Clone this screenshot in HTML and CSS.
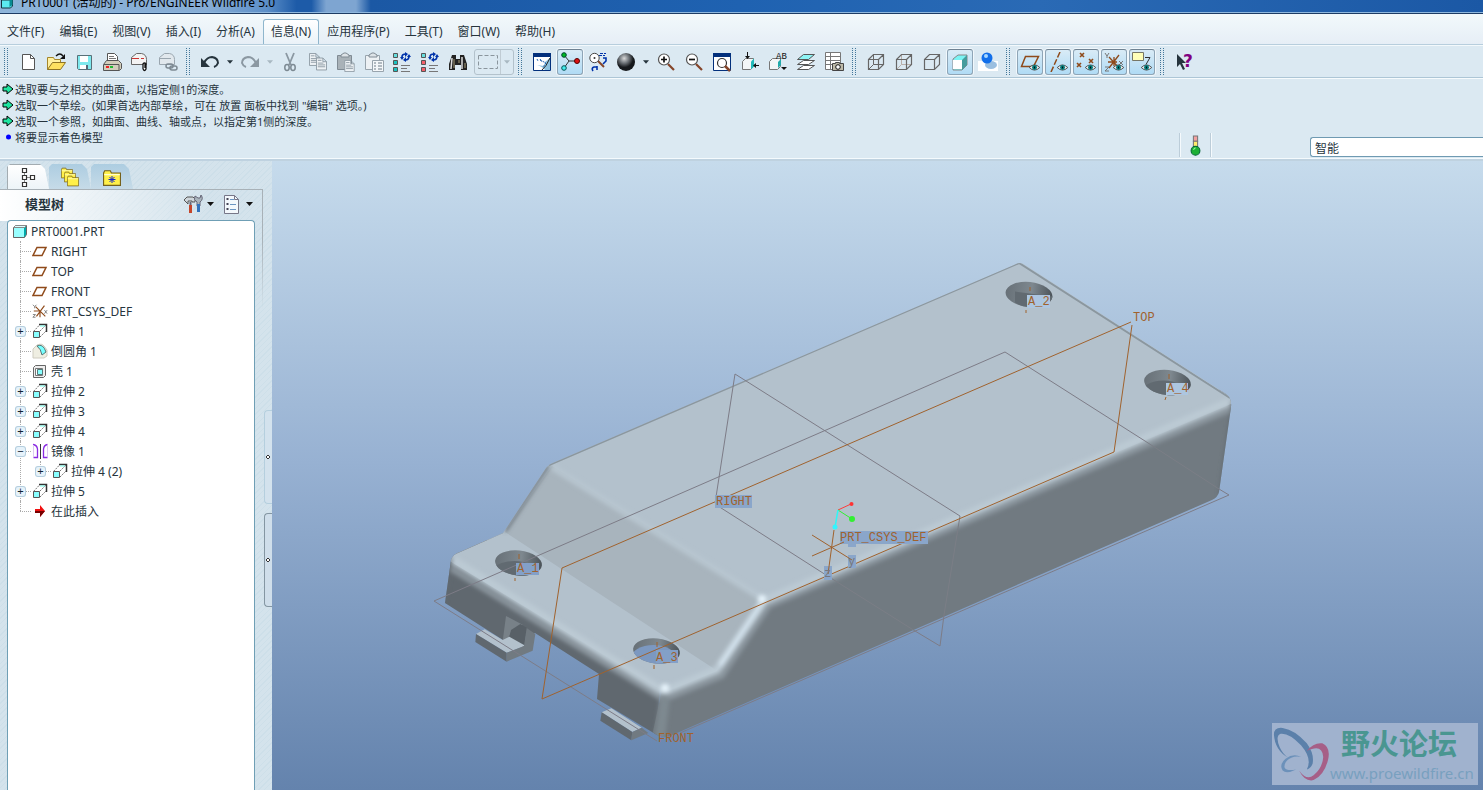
FILE: index.html
```html
<!DOCTYPE html>
<html lang="zh-CN">
<head>
<meta charset="utf-8">
<title>PRT0001 (活动的) - Pro/ENGINEER Wildfire 5.0</title>
<link rel="stylesheet" href="styles.css">
</head>
<body>
<svg class="defs" aria-hidden="true">
  <defs>
    <symbol id="plane" viewBox="0 0 16 16"><path d="M5 4.500h9l-4 8H1z" fill="none" stroke="#8f4a1a" stroke-width="1.500"/></symbol>
    <symbol id="extrude" viewBox="0 0 16 16"><path d="M1.500 8.500l6-6.500M8 14l6-6M8 8l6-6" fill="none" stroke="#777" stroke-dasharray="2 1"/><path d="M7 1.500h7.500V9" fill="none" stroke="#333" stroke-width="1.500"/><path d="M8 3h5" stroke="#7fe" /><path d="M1.500 8.500h6v6h-6z" fill="#8ff" stroke="#555"/></symbol>
    <symbol id="cube" viewBox="0 0 16 16"><path d="M1.500 4.500l2-2h11v9l-2 3h-11z" fill="#0aa" stroke="#666"/><path d="M1.500 4.500l2-2h11l-2 2z" fill="#dff" stroke="#888"/><path d="M2 5h10v9H2z" fill="#9ff"/></symbol>
    <symbol id="eye" viewBox="0 0 12 8"><path d="M0 4Q6-2 12 4Q6 10 0 4z" fill="#eee" stroke="#444"/><circle cx="6" cy="4" r="2.800" fill="#077"/><path d="M6 3v2" stroke="#000"/></symbol>
    <symbol id="page" viewBox="0 0 12 14"><path d="M.5.5h7l4 4v9H.5zM7.500.5v4h4" fill="#eef2f5" stroke="#8b98a2"/><path d="M2 6h6M2 8h8M2 10h8M2 3h4" stroke="#8b98a2"/></symbol>
    <symbol id="wire" viewBox="0 0 20 20"><path d="M2.500 7.500l5-5h10v10l-5 5h-10zM2.500 7.500h10v10M12.500 7.500l5-5" fill="none" stroke="#666" stroke-width="1.200"/></symbol>
    <symbol id="lens" viewBox="0 0 20 20"><path d="M12 12l6 6" stroke="#854529" stroke-width="2.200"/><circle cx="8" cy="7.500" r="5.500" fill="#fff" stroke="#555" stroke-width="1.200"/></symbol>
    <symbol id="regen" viewBox="0 0 20 20"><path d="M1.500 1.500h4v4h-4z" stroke="#555" fill="#6dd"/><path d="M1.500 8.500h4v4h-4zM1.500 15.500h4v4h-4z" stroke="#555" fill="currentColor"/><path d="M10 5Q10 2 14 2M17 4Q17 8 13 8" stroke="#03a" stroke-width="1.700" fill="none"/><path d="M13 0l3 2-3 3zM14 5l-3 3 3 2zM8 5h4l-2 3zM15 5h4l-2-3z" fill="#03a"/><path d="M9 13.500h9M9 16.500h6M9 19.500h9" stroke="#777"/></symbol>
    <symbol id="folder" viewBox="0 0 16 16"><path d="M.5 3.500l1-2h5l1 2h8v11H.5z" fill="#fff04a" stroke="#75611c"/><path d="M1 5h14" stroke="#ffc"/></symbol>
    <symbol id="csys" viewBox="0 0 18 16"><path d="M4 3l11 11M14 2L5 14M9 8h-7M9 8v7" stroke="#8f4a1a" stroke-width="1.300"/><path d="M1 1l2 2 2-2M3 3v2M14 7l3 4M17 7l-3 4M1 12h3l-3 3h3" stroke="#777" fill="none"/></symbol>
    <symbol id="csys-large" viewBox="0 0 20 20"><path d="M5 5l10 11M15 3L5 16M4 10h9M10 5v9" stroke="#8f4a1a" stroke-width="1.300"/><path d="M1 1l2 3 2-3M3 4v2M15 9l4 4M19 9l-4 4M1 15h4l-4 4h4" stroke="#777" fill="none"/></symbol>
    <symbol id="arrow" viewBox="0 0 12 12"><path d="M1 4h4V1l6 5-6 5V8H1z" fill="#1fe5a0" stroke="#000"/></symbol>
    <symbol id="caret" viewBox="0 0 7 4"><path d="M0 0h7L3.500 4z" fill="currentColor"/></symbol>
    <pattern id="grip-dots" width="3" height="2" patternUnits="userSpaceOnUse"><path d="M0 0h1v1H0z" fill="#43779a"/></pattern>
    <symbol id="handle"><path d="M0 0h8v28H0z" fill="url(#grip-dots)"/></symbol>
  </defs>
</svg>

<div class="app">
  <header class="titlebar">
    <svg class="title-icon" viewBox="0 0 14 10"><path d="M1.500 0v8h9l2-2V0z" fill="#5ceaf0" stroke="#163540"/><path d="M9.500 0v7l3-2V0z" fill="#078b92"/></svg>
    <span>PRT0001 (活动的) - Pro/ENGINEER Wildfire 5.0</span>
  </header>

  <nav class="menubar">
    <button>文件(F)</button><button>编辑(E)</button><button>视图(V)</button><button>插入(I)</button><button>分析(A)</button><button class="open">信息(N)</button><button>应用程序(P)</button><button>工具(T)</button><button>窗口(W)</button><button>帮助(H)</button>
  </nav>

  <div class="toolbar" role="toolbar">
    <svg class="handle"><use href="#handle"/></svg>
    <button aria-label="新建"><svg viewBox="0 0 20 20"><path d="M4.500 2.500h8l4 4v11h-12z" fill="#fff" stroke="#555"/><path d="M12.500 2.500v4h4" fill="none" stroke="#555"/></svg></button>
    <button aria-label="打开"><svg viewBox="0 0 20 20"><path d="M1.500 17.500v-12h6l1 2h6v3" fill="#fff0a0" stroke="#a5862a"/><path d="M1.500 17.500l5-7h13l-5 7z" fill="#fde060" stroke="#8d7324"/><path d="M10 4Q14 0 17 4" fill="none" stroke="#111" stroke-width="1.300"/><path d="M19 2v5h-5z" fill="#111"/></svg></button>
    <button aria-label="保存"><svg viewBox="0 0 20 20"><path d="M3.500 3.500h14v14h-13l-1-1z" fill="#7ee9ee" stroke="#587078"/><path d="M6 4h8v6H6zM6 13h8v4H6z" fill="#fff"/><path d="M12 13h2v4h-2z" fill="#567"/></svg></button>
    <button aria-label="打印"><svg viewBox="0 0 20 20"><path d="M5.500 9V1.500h7l3 3V10" fill="#fff" stroke="#555"/><path d="M7 4.500h5M7 6.500h7" stroke="#777"/><path d="M1.500 12.500l3-4h12l3 3v5l-2 2h-16z" fill="#d2cebc" stroke="#555"/><path d="M2 12.500h15V18" stroke="#555" fill="none"/><path d="M4 14h3v2H4z" fill="#e22"/><path d="M8 14h3v2H8z" fill="#2b3"/></svg></button>
    <button aria-label="附件邮件"><svg viewBox="0 0 20 20"><path d="M1.500 12.500v-7l5-4h5q5 1 5 6v5z" fill="#f3f3f3" stroke="#666"/><path d="M2 6.500h7M11 6.500h3" stroke="#c33"/><path d="M13 17v-5q1.500-2 3 0v5q-1.500 3-3 0M15 12v4" stroke="#111" stroke-width="1.300" fill="#fff"/></svg></button>
    <button aria-label="链接邮件"><svg viewBox="0 0 20 20"><path d="M1.500 12.500v-7l5-4h5q5 1 5 6v5z" fill="#e1e8ed" stroke="#9aa6af"/><path d="M2 6.500h11" stroke="#9aa6af"/><g fill="none" stroke="#7d8992" stroke-width="1.500"><rect x="8" y="12" width="7" height="4" rx="2"/><rect x="12" y="14" width="7" height="4" rx="2"/></g></svg></button>
    <svg class="handle"><use href="#handle"/></svg>
    <button aria-label="撤消"><svg viewBox="0 0 20 20"><path d="M4 11Q7 5 12 5q6 1 6 6q-1 3-4 4" fill="none" stroke="#26343d" stroke-width="2"/><path d="M1 6v9h9z" fill="#26343d"/></svg></button>
    <button class="drop" aria-label="撤消列表"><svg><use href="#caret"/></svg></button>
    <button aria-label="重做"><svg viewBox="0 0 20 20"><path d="M16 11Q13 5 8 5q-6 1-6 6q1 3 4 4" fill="none" stroke="#8b98a2" stroke-width="2"/><path d="M19 6v9h-9z" fill="#8b98a2"/></svg></button>
    <button class="drop faded" aria-label="重做列表"><svg><use href="#caret"/></svg></button>
    <button aria-label="剪切"><svg viewBox="0 0 20 20"><path d="M6 1l5 12M14 1L9 13" stroke="#8b98a2" stroke-width="1.800"/><g fill="none" stroke="#7c8992" stroke-width="1.500"><ellipse cx="7" cy="15.500" rx="2.200" ry="3"/><ellipse cx="13" cy="15.500" rx="2.200" ry="3"/></g></svg></button>
    <button aria-label="复制"><svg viewBox="0 0 20 20"><use href="#page" x="1" y="1" width="11" height="13"/><use href="#page" x="8" y="5" width="11" height="14"/></svg></button>
    <button aria-label="粘贴"><svg viewBox="0 0 20 20"><path d="M1.500 3.500h14v14h-14z" fill="#a9b2b8" stroke="#808b94"/><path d="M5 5V3l3-2h2l3 2v2z" fill="#dde3e7" stroke="#808b94"/><use href="#page" x="8" y="8" width="11" height="12"/></svg></button>
    <button aria-label="选择性粘贴"><svg viewBox="0 0 20 20"><path d="M1.500 3.500h14v14h-14z" fill="#edf1f4" stroke="#98a4ad"/><path d="M5 5V3l3-2h2l3 2v2z" fill="#dde3e7" stroke="#808b94"/><path d="M8.500 8.500h11v11h-11z" fill="#f4f7f9" stroke="#98a4ad"/><path d="M10 11h2M14 11h4M10 14h2M14 14h4M10 17h2M14 17h4" stroke="#6e7c88"/></svg></button>
    <button aria-label="再生" class="teal"><svg viewBox="0 0 20 20"><use href="#regen"/></svg></button>
    <button aria-label="再生管理器" class="red"><svg viewBox="0 0 20 20"><use href="#regen"/></svg></button>
    <button aria-label="查找"><svg viewBox="0 0 20 20"><path d="M4 3h4v4h4V3h4l3 9v6h-6v-5H7v5H1v-6z" fill="#222"/><path d="M4 6l-1 11M14 5v12" stroke="#ddd" stroke-width="1.500"/><path d="M6 7v9M11 8v3M17 11v5" stroke="#a59b77"/></svg></button>
    <span class="selectbox"><button aria-label="选取框"><svg viewBox="0 0 20 14"><path d="M.5.5h19v13H.5z" fill="none" stroke="#8a959d" stroke-dasharray="4 2"/></svg></button><button class="drop faded" aria-label="选取框列表"><svg><use href="#caret"/></svg></button></span>
    <svg class="handle"><use href="#handle"/></svg>
    <button aria-label="重画"><svg viewBox="0 0 20 20"><path d="M1.500 1.500h17v17h-17z" fill="#fff" stroke="#03307c"/><path d="M1 1h18v4H1z" fill="#03307c"/><path d="M18 6v12h-5q-2-3-8-5l7 1 1-4z" fill="#8cc3e0"/><path d="M8 8l6 3-3 4M5 7l1 2M8 7l2 3" stroke="#1c61b0" stroke-dasharray="2 1" fill="none"/><path d="M10 18q4-3 8-12" stroke="#222" fill="none"/></svg></button>
    <button class="on" aria-label="旋转中心"><svg viewBox="0 0 20 20"><path d="M4 3l5 6h8M9 9l-5 7" stroke="#333" fill="none"/><circle cx="4" cy="3" r="2.300" fill="#0b2" stroke="#043"/><circle cx="17" cy="9" r="2.500" fill="#d11" stroke="#500"/><circle cx="4" cy="16" r="2.300" fill="#4ee" stroke="#055"/></svg></button>
    <button aria-label="定向模式"><svg viewBox="0 0 20 20"><path d="M10 9l6 6" stroke="#854529" stroke-width="2"/><circle cx="6.500" cy="6" r="4.700" fill="#fff" stroke="#444"/><circle cx="6.500" cy="6" r="1" fill="#333"/><path d="M12 1.500h6M11 3.500h6" stroke="#03a" stroke-dasharray="3 1"/><path d="M15 6h3v3l-3 3M5 19q-2-3 1-4h3M9 14v4" stroke="#03a" stroke-width="1.600" fill="none"/></svg></button>
    <button aria-label="外观库"><svg viewBox="0 0 20 20"><defs><radialGradient id="ball" cx=".4" cy=".3"><stop stop-color="#d8d8d8"/><stop offset=".5" stop-color="#74797e"/><stop offset="1" stop-color="#16191c"/></radialGradient></defs><circle cx="10" cy="10" r="9" fill="url(#ball)"/></svg></button>
    <button class="drop" aria-label="外观列表"><svg><use href="#caret"/></svg></button>
    <button aria-label="放大"><svg viewBox="0 0 20 20"><use href="#lens"/><path d="M5 7.500h6M8 4.500v6" stroke="#111" stroke-width="1.700"/></svg></button>
    <button aria-label="缩小"><svg viewBox="0 0 20 20"><use href="#lens"/><path d="M5 7.500h6" stroke="#111" stroke-width="1.700"/></svg></button>
    <button aria-label="重新调整"><svg viewBox="0 0 20 20"><path d="M1.500 1.500h17v17h-17z" fill="#fff" stroke="#03307c"/><path d="M1 1h18v4H1z" fill="#03307c"/><circle cx="10" cy="11" r="4.500" fill="#fff" stroke="#333" stroke-width="1.200"/><path d="M13 14l5 5" stroke="#854529" stroke-width="2.500"/></svg></button>
    <button aria-label="重定向"><svg viewBox="0 0 20 20"><path d="M2.500 9.500l3-3h8v8l-3 3h-8z" fill="#f4f6f7" stroke="#777"/><path d="M11 9.500l3-3v8l-3 3z" fill="#2bb"/><path d="M7.500 0v6M14 13.500h5" stroke="#111"/><path d="M5 4h5L7.500 7zM16 11v5l-3-2.500z" fill="#111"/></svg></button>
    <button aria-label="视图列表"><svg viewBox="0 0 20 20"><path d="M1.500 9.500l3-3h8v8l-3 3h-8z" fill="#f4f6f7" stroke="#777"/><path d="M10 10l3-3v6l-3 3z" fill="#2aa"/><text x="8" y="7" font-family="Liberation Mono" font-size="9" fill="#111">AB</text><path d="M13 15h6l-3 3z" fill="#111"/></svg></button>
    <button aria-label="图层"><svg viewBox="0 0 20 20"><g stroke="#555" fill="#fff"><path d="M1.500 17.500l6-4h11l-6 4z"/><path d="M1.500 12.500l6-4h11l-6 4z"/><path d="M1.500 7.500l6-5h11l-6 5z" fill="#8ef4f4"/></g></svg></button>
    <button aria-label="视图管理器"><svg viewBox="0 0 20 20"><path d="M1.500.5h15v17h-15zM6.500 1v16M2 4.500h14M2 8.500h14M2 12.500h8" fill="#fff" stroke="#777"/><path d="M8.500 11.500h3v-1h4v1h4v7h-11z" fill="#bdb9a8" stroke="#444"/><circle cx="14" cy="15" r="2.300" fill="#fff" stroke="#111"/></svg></button>
    <svg class="handle"><use href="#handle"/></svg>
    <button aria-label="线框"><svg viewBox="0 0 20 20"><use href="#wire"/><path d="M7.500 2.500v10h10M7.500 12.500l-5 5" stroke="#666" fill="none"/></svg></button>
    <button aria-label="隐藏线"><svg viewBox="0 0 20 20"><path d="M7.500 2.500v10h10M7.500 12.500l-5 5" stroke="#b9b0ab" fill="none"/><use href="#wire"/></svg></button>
    <button aria-label="无隐藏线"><svg viewBox="0 0 20 20"><use href="#wire"/></svg></button>
    <button class="on" aria-label="着色"><svg viewBox="0 0 20 20"><path d="M3 7l5-4h9v10l-5 5H3z" fill="#7af4f4" stroke="#888"/><path d="M3 8h9v9H3z" fill="#fff"/><path d="M12 8l5-5v10l-5 5z" fill="#469c9d"/></svg></button>
    <button aria-label="增强的真实感"><svg viewBox="0 0 20 20"><path d="M0 9h20v10H0z" fill="#fff"/><ellipse cx="13" cy="13" rx="6" ry="4" fill="#9bbfe0"/><circle cx="9" cy="6" r="5.500" fill="#126fea"/><circle cx="8" cy="4" r="2" fill="#a9d8ff"/></svg></button>
    <svg class="handle"><use href="#handle"/></svg>
    <button class="on" aria-label="平面显示"><svg viewBox="0 0 20 20"><path d="M5.500 4.500h13l-5 10h-12z" fill="none" stroke="#8f4a1a" stroke-width="1.500"/><use href="#eye" x="9" y="12" width="11" height="7"/></svg></button>
    <button class="on" aria-label="轴显示"><svg viewBox="0 0 20 20"><path d="M12 0L3 20" stroke="#8f4a1a" stroke-width="1.500" stroke-dasharray="6 2"/><use href="#eye" x="9" y="12" width="11" height="7"/></svg></button>
    <button class="on" aria-label="点显示"><svg viewBox="0 0 20 20"><path d="M4 1l4 4M8 1L4 5M13 7l4 4M17 7l-4 4M1 11l4 4M5 11l-4 4" stroke="#8f4a1a" stroke-width="1.600"/><use href="#eye" x="9" y="12" width="11" height="7"/></svg></button>
    <button class="on" aria-label="坐标系显示"><svg viewBox="0 0 20 20"><use href="#csys-large"/><use href="#eye" x="9" y="12" width="11" height="7"/></svg></button>
    <button class="on" aria-label="注释显示"><svg viewBox="0 0 20 20"><path d="M.5.5h11v8H.5z" fill="#ffffb8" stroke="#776"/><path d="M13 5.500h5l-4 7" stroke="#333" fill="none"/><use href="#eye" x="9" y="12" width="11" height="7"/></svg></button>
    <svg class="handle"><use href="#handle"/></svg>
    <button aria-label="帮助"><svg viewBox="0 0 20 20"><path d="M3 2v13l3-3 3 6 2-1-3-6h4z" fill="#26343d"/><text x="9" y="15" font-family="DejaVu Sans" font-weight="bold" font-size="17" fill="#800080">?</text></svg></button>
  </div>

  <section class="dashboard">
    <ul class="messages">
      <li><svg><use href="#arrow"/></svg>选取要与之相交的曲面，以指定侧1的深度。</li>
      <li><svg><use href="#arrow"/></svg>选取一个草绘。(如果首选内部草绘，可在 放置 面板中找到 "编辑" 选项。)</li>
      <li><svg><use href="#arrow"/></svg>选取一个参照，如曲面、曲线、轴或点，以指定第1侧的深度。</li>
      <li><svg viewBox="0 0 12 12"><circle cx="6.500" cy="6" r="2.500" fill="#00f"/></svg>将要显示着色模型</li>
    </ul>
    <div class="status">
      <span class="light"><svg viewBox="0 0 10 20"><path d="M3 1h4v5H3z" fill="#f2a0a0" stroke="#777"/><path d="M3 6h4v5H3z" fill="#ffec6a" stroke="#777"/><circle cx="5" cy="15" r="4.200" fill="#1caf35" stroke="#063"/><path d="M3 14l2-2" stroke="#9f9"/></svg></span>
      <select aria-label="过滤器"><option>智能</option></select>
    </div>
  </section>

  <main class="workspace">
    <aside class="sidebar">
      <div class="tabs">
        <button class="tab active" aria-label="模型树"><svg viewBox="0 0 20 20"><path d="M5.500 4v14M5.500 10.500h8" stroke="#888"/><path d="M3.500 1.500h4v4h-4zM3.500 8.500h4v4h-4zM11.500 8.500h4v4h-4zM3.500 15.500h4v4h-4z" fill="#fff" stroke="#333" stroke-width="1.200"/></svg></button>
        <button class="tab" aria-label="文件夹浏览器"><svg viewBox="0 0 20 20"><use href="#folder" x="1" y="0" width="12" height="12"/><use href="#folder" x="4" y="4" width="12" height="12"/><use href="#folder" x="7" y="8" width="12" height="12"/></svg></button>
        <button class="tab" aria-label="收藏夹"><svg viewBox="0 0 20 20"><use href="#folder" x="1" y="2" width="18" height="18"/><path d="M10 9v7M6.500 12.500h7M7.500 10l5 5M12.500 10l-5 5" stroke="#1325c8"/></svg></button>
      </div>
      <div class="panel">
        <div class="panel-head">
          <h2>模型树</h2>
          <button aria-label="设置"><svg class="tool" viewBox="0 0 20 20"><path d="M1 6l3-3h6l2 2v3h-3V7H5v3z" fill="#cfd6db" stroke="#555"/><path d="M7.500 8v4" stroke="#667" stroke-width="2"/><path d="M7.500 11v8" stroke="#c5452a" stroke-width="3"/><path d="M12 2q-2 4 2 6v4h3V8q4-3 1-7l-1 3h-2z" fill="#aab5bd" stroke="#667"/><path d="M15.500 10v8" stroke="#3272bc" stroke-width="3"/></svg><svg class="car"><use href="#caret"/></svg></button>
          <button aria-label="显示"><svg class="tool" viewBox="0 0 20 20"><path d="M2.500 1.500h10l4 4v14h-14z" fill="#f3f8fc" stroke="#778"/><path d="M12.500 1.500v4h4" stroke="#778" fill="none"/><path d="M4.500 5h2M4.500 10h2M4.500 15h2" stroke="#445" stroke-width="2"/><path d="M8 5.500h4M8 10.500h6M8 15.500h6" stroke="#6b96c3"/></svg><svg class="car"><use href="#caret"/></svg></button>
        </div>
        <div class="tree">
          <div class="row root"><svg><use href="#cube"/></svg>PRT0001.PRT</div>
          <ul>
            <li><div class="row"><i class="node"></i><svg><use href="#plane"/></svg>RIGHT</div></li>
            <li><div class="row"><i class="node"></i><svg><use href="#plane"/></svg>TOP</div></li>
            <li><div class="row"><i class="node"></i><svg><use href="#plane"/></svg>FRONT</div></li>
            <li><div class="row"><i class="node"></i><svg><use href="#csys"/></svg>PRT_CSYS_DEF</div></li>
            <li><div class="row"><i class="node"><button aria-label="展开">+</button></i><svg><use href="#extrude"/></svg>拉伸 1</div></li>
            <li><div class="row"><i class="node"></i><svg viewBox="0 0 16 16"><path d="M1 6l4-4q5-2 7 1l3 4v6l-3 2H1z" fill="#efeee2" stroke="#cfccc0"/><path d="M5 3q6-3 9 6l-4 3q-1-6-5-9z" fill="#7ff" stroke="#577"/></svg>倒圆角 1</div></li>
            <li><div class="row"><i class="node"></i><svg viewBox="0 0 16 16"><path d="M1.500 4.500l2-2h10v10l-2 2h-10z" fill="#eee" stroke="#666"/><path d="M3.500 5.500h7v7h-7z" fill="#fff" stroke="#777"/><path d="M5.500 6.500h5v5h-5z" fill="#8ff" stroke="#577"/></svg>壳 1</div></li>
            <li><div class="row"><i class="node"><button aria-label="展开">+</button></i><svg><use href="#extrude"/></svg>拉伸 2</div></li>
            <li><div class="row"><i class="node"><button aria-label="展开">+</button></i><svg><use href="#extrude"/></svg>拉伸 3</div></li>
            <li><div class="row"><i class="node"><button aria-label="展开">+</button></i><svg><use href="#extrude"/></svg>拉伸 4</div></li>
            <li><div class="row"><i class="node"><button aria-label="折叠">−</button></i><svg viewBox="0 0 16 16"><path d="M8.500 1v15" stroke="#333"/><path d="M1.500 14.500h4V6Q5 2 1 1.500M15.500 14.500h-4V6q.5-4 4-4.500" fill="none" stroke="#8a2be2" stroke-width="1.300"/><path d="M1.500 2v12M15.500 2v12" stroke="#dcc8f2"/></svg>镜像 1</div>
              <ul><li><div class="row"><i class="node"><button aria-label="展开">+</button></i><svg><use href="#extrude"/></svg>拉伸 4 (2)</div></li></ul>
            </li>
            <li><div class="row"><i class="node"><button aria-label="展开">+</button></i><svg><use href="#extrude"/></svg>拉伸 5</div></li>
            <li><div class="row"><i class="node"></i><svg viewBox="0 0 16 16"><path d="M3 6h5V2l5 6-5 6v-4H3z" fill="#f01010"/><path d="M3 8h10l-5 6v-4H3z" fill="#700"/></svg>在此插入</div></li>
          </ul>
        </div>
      </div>
      <div class="splitter"><button class="grip pale" aria-label="浏览器"></button><button class="grip" aria-label="导航器"></button></div>
    </aside>

    <div class="viewport">
      <svg class="model" viewBox="272 161 1211 629" preserveAspectRatio="xMidYMid slice">
        <defs>
          <clipPath id="body"><path d="M1014 265Q1020 261 1025 265L1226 394Q1232 398 1231 407L1219 492Q1218 497 1212 500L670 736Q665 738 657 735L597 699L599 674L535 633L503 640L445 603L451 560Q453 554 460 552L503 533L546 468Q549 464 555 462z"/></clipPath>
          <filter id="soft"><feGaussianBlur stdDeviation="2"/></filter>
          <linearGradient id="wall"><stop stop-color="#687178"/><stop offset=".55" stop-color="#7e888f"/><stop offset="1" stop-color="#4b5359"/></linearGradient>
          <g id="hole"><ellipse rx="23.500" ry="12.500" transform="rotate(6)" fill="url(#wall)"/></g>
          <clipPath id="mouth"><ellipse rx="23.500" ry="12.500" transform="rotate(6)"/></clipPath>
        </defs>
        <g clip-path="url(#body)">
          <path d="M430 540h232l-4 205H430z" fill="#60686f"/>
          <path d="M1240 380V510L650 745 662 690 720 668 765 600z" fill="#717a81"/>
          <path d="M1019 255L1240 398 1231 404 763 602 717 671 668 691 661 690 448 560 440 550 500 520 548 455z" fill="#b3c1cc"/>
          <path d="M505 532L552 466 763 599 716 670z" fill="#a8b4bd"/>
          <g fill="none" filter="url(#soft)">
            <path d="M448 567L661 698L670 697L722 676L769 606L1234 408" stroke="#8d98a0" stroke-width="5"/>
            <path d="M453 560L661 690L668 690L717 670L764 601L1229 402" stroke="#bccad4" stroke-width="8"/>
            <path d="M552 467L763 599" stroke="#b8c6d0" stroke-width="6"/>
            <path d="M720 665L762 603" stroke="#cfdee8" stroke-width="6"/>
            <path d="M665 697L660 738" stroke="#7e8990" stroke-width="10"/>
            <path d="M451 558L444 603M505 531L549 465M1233 402L1220 495" stroke="#606970" stroke-width="3"/>
          </g>
          <path d="M451 555L503 532M549 465L1019 263L1230 398" stroke="#8b979f" stroke-width="2" fill="none"/>
          <g filter="url(#soft)" fill="#e8f5fd"><circle cx="762" cy="599" r="4"/><circle cx="665" cy="688" r="4"/></g>
        </g>

        <g transform="translate(420 450) scale(.33333)">
          <path d="M258 498l50 26-34 20-10 22-16 8z" fill="#788188"/><path d="M273 540l28-18 20 12-8 60-45-32z" fill="#586067"/>
          <path d="M168 552l26-14 54 32 20-10 48 27-56 21z" fill="#b3c1cc"/>
          <path d="M168 552l92 56v27l-94-59z" fill="#60686f"/><path d="M260 608l52-20 8-54 26 18-8 50-78 33z" fill="#717a81"/>
          <path d="M545 787l29-12 91 58-28 13z" fill="#b3c1cc"/><path d="M545 787l92 59-3 25-93-59z" fill="#60686f"/><path d="M637 846l28-13 20 16-51 22z" fill="#717a81"/>
        </g>

        <g transform="translate(518.500 563)"><use href="#hole"/><ellipse cx="-4" cy="10" rx="23" ry="12" fill="#616a71" clip-path="url(#mouth)"/></g>
        <g transform="translate(656.500 651)"><use href="#hole"/><ellipse cx="-3" cy="8" rx="23" ry="14" fill="#7c98c0" clip-path="url(#mouth)"/></g>
        <g transform="translate(1029 294.500)"><use href="#hole"/><path d="M-14-3L24 2V14H-4L-14 8z" fill="#616a71" clip-path="url(#mouth)"/></g>
        <g transform="translate(1167.500 382.500)"><use href="#hole"/><ellipse cx="-4" cy="12" rx="23" ry="14" fill="#616a71" clip-path="url(#mouth)"/></g>

        <g class="datum gray">
          <path d="M657 741L434 601L1005 352L1145 441M1219 489L1229 495L680 733"/>
          <path d="M716 497L735 374L960 516M718 506L826 575M915 631L940 646L944 615"/>
          <path class="faint" d="M1145 441L1219 489M960 516L944 615M826 575L915 631"/>
        </g>
        <path class="datum brown" d="M1131 322L562 568L542 699L1114 452L1132 325"/>

        <g class="boxes">
          <path d="M715 495h37v13h-37zM840 531h88v13h-88zM848 544h8v3h-8zM848 555h8v13h-8zM824 566h8v14h-8z"/>
          <path d="M516 563h23v12h-23zM656 650h22v13h-22z" fill="#83a0c8"/><path d="M1027 295h23v13h-23zM1166 383h22v12h-22z" fill="#adc6e0"/>
        </g>
        <path class="datum brown" d="M812 535L852 560M812 556L844 542M834 530L828 574M519 554v5M515 578v3M657 642v5M654 665v4M1030 287v4M1026 310v3M1169 374v5M1165 400l1-3"/>
        <g class="labels">
          <text x="716" y="505">RIGHT</text><text x="840" y="541">PRT_CSYS_DEF</text><text x="1133" y="321">TOP</text><text x="658" y="742">FRONT</text>
          <text x="517" y="572">A_1</text><text x="656" y="661">A_3</text><text x="1028" y="305">A_2</text><text x="1167" y="392">A_4</text>
          <text x="848" y="565" fill="#77777e">y</text><text x="824" y="577" fill="#77777e">z</text>
        </g>
        <path d="M838 510L851 504" stroke="#ff3b3b"/><path d="M838 510L852 519" stroke="#32f032"/><path d="M838 510L835 527" stroke="#32f5f5" stroke-width="1.500"/>
        <circle cx="851.500" cy="504" r="2" fill="#ff3333"/><circle cx="852" cy="519" r="3" fill="#32f032"/><circle cx="835" cy="527" r="2.500" fill="#32f5ff"/>
      </svg>
      <div class="watermark">
        <svg viewBox="0 0 60 62"><path d="M2 11Q2 3 11 4Q24 6 36 20Q44 31 42 41Q40 46 36 47Q42 36 30 22Q18 9 9 10Q3 12 8 24Q11 31 17 35Q3 27 2 11z" fill="#5b80aa"/><path d="M36 28Q43 19 52 20Q61 24 58 37Q54 53 43 58Q34 60 28 48Q36 59 43 53Q52 46 53 34Q52 20 36 28z" fill="#a65f87"/><path d="M30 34Q22 30 14 36Q7 42 11 48Q15 52 25 47Q15 49 13 45Q12 39 20 35Q24 33 30 34z" fill="#6c91ba"/></svg>
        <div><strong>野火论坛</strong><span>www.proewildfire.cn</span></div>
      </div>
    </div>
  </main>
</div>
</body>
</html>
```
FILE: styles.css
```css
* { box-sizing: border-box; }
body { margin: 0; font: 12px "Noto Sans", "Noto Sans CJK SC", sans-serif; color: #26343d; }
button { font: inherit; color: inherit; background: none; border: 0; padding: 0; margin: 0; }
ul { list-style: none; margin: 0; padding: 0; }
.defs { position: absolute; width: 0; height: 0; }

.app { display: flex; flex-direction: column; height: 100vh; overflow: hidden; background: #dbe9f2; }

.titlebar {
  display: flex; gap: 7px; height: 14px; flex: none; overflow: hidden;
  border-bottom: 1px solid #1d3c64; box-shadow: inset 0 -1px #8fb8de;
  color: #000; line-height: 6px;
  background: linear-gradient(90deg, #8db4d9 0, #86add5 14%, #5c8fc8 18%, #1d5ba8 20%, #1d5ba8 21%, #7ea5d1 22%, #7ea5d1 24%, #1b58a4 25%, #1f62b1 50%, #2a6ab5 70%, #1b58a5 100%);
}
.titlebar span { white-space: nowrap; }
.title-icon { width: 14px; height: 10px; }

.menubar { display: flex; align-items: flex-end; gap: 1px; flex: none; height: 31px; background: linear-gradient(#f2f9fb, #e6eef6); border-bottom: 1px solid #b7cedd; }
.menubar button { height: 25px; padding: 0 7px; border: 0 solid #8fb6cd; white-space: nowrap; line-height: 24px; }
.menubar .open { background: linear-gradient(#fff, #eaf2f8); border-width: 1px 1px 0; border-radius: 3px 3px 0 0; line-height: 22px; }

.toolbar { display: flex; align-items: center; flex: none; height: 33px; border-bottom: 1px solid #adc6d6; border-top: 1px solid #f3f9fc; }
.toolbar > button { display: grid; place-items: center; flex: none; width: 28px; height: 28px; border-radius: 3px; }
.toolbar button > svg { width: 20px; height: 20px; }
.toolbar > .on { width: 26px; height: 26px; margin: 0 1px; border: 1px solid #8fa5b6; border-top-color: #6f8292; background: linear-gradient(#d9ebf6, #b0dbf5); box-shadow: 0 0 0 1px #f1f8fc; }
.toolbar > .drop, .selectbox .drop { display: grid; place-items: center; width: 12px; color: #26343d; }
.toolbar .drop > svg { width: 6px; height: 4px; }
.toolbar .faded { color: #a9b8c2; }
.teal { color: #1bc0c0; }
.red { color: #f4606a; }
.handle { flex: none; width: 4px; height: 28px; margin: 0 6px 0 4px; overflow: hidden; }
.selectbox { display: flex; width: 40px; height: 26px; margin: 0 0 0 2px; border: 1px solid #b3c2cc; border-radius: 3px; flex: none; }
.selectbox button:first-child { width: 26px; display: grid; place-items: center; border-right: 1px solid #c0ccd4; }
.selectbox button:first-child > svg { width: 20px; height: 14px; }

.dashboard { display: flex; justify-content: space-between; flex: none; height: 83px; border-top: 1px solid #f6fbfd; border-bottom: 2px solid #bfd2e0; box-shadow: inset 0 -1px #f4fafd; }
.messages { padding-top: 2px; font-size: 11px; }
.messages li { display: flex; align-items: center; gap: 1px; height: 16px; padding-left: 2px; white-space: nowrap; }
.messages svg { width: 12px; height: 12px; }
.status { display: flex; align-items: flex-end; flex: none; gap: 99px; padding-bottom: 2px; }
.light { display: grid; place-items: center; width: 32px; height: 24px; border: 1px solid #bccdd9; border-width: 0 1px; box-shadow: 1px 0 #f5fafd, inset 1px 0 #f5fafd; }
.light svg { width: 11px; height: 21px; }
.status select { appearance: none; width: 173px; height: 20px; border: 1px solid #6f9ab2; border-right: 0; border-radius: 3px 0 0 3px; padding: 0 4px; background: #fff; font: 12px "Noto Sans CJK SC", sans-serif; color: #26343d; }

.workspace { display: flex; flex: 1; min-height: 0; }
.sidebar { display: grid; grid-template: 28px 1fr / 263px 9px; flex: none; background: repeating-linear-gradient(135deg, #d4e3ec 0 3px, #cddfe9 3px 4px); }
.tabs { grid-column: 1 / 3; display: flex; align-items: flex-end; padding-left: 7px; }
.tab { display: grid; place-items: center; width: 42px; height: 25px; background: linear-gradient(#adcde1, #c6dbe8); clip-path: polygon(0 3px, 3px 0, 33px 0, 38px 5px, 100% 100%, 0 100%); }
.tab svg { width: 20px; height: 20px; }
.tab.active { background: linear-gradient(#fff, #edf4f8); border: 1px solid #a3acb1; border-width: 1px 0 0 1px; }
.panel { display: flex; flex-direction: column; border: 1px solid #a8b1b7; border-width: 1px 1px 0 0; border-image: linear-gradient(#a8b1b7 0 50px, transparent 120px) 1; padding-right: 7px; background: linear-gradient(90deg, #fff, transparent 80%) 0 0 / 100% 31px no-repeat; min-height: 0; }
.panel-head { display: flex; align-items: center; gap: 8px; height: 30px; padding: 0 2px 2px 25px; flex: none; }
.panel-head h2 { flex: 1; margin: 0; font-size: 13px; line-height: 18px; font-weight: 700; }
.panel-head button { display: flex; align-items: center; gap: 4px; }
.tool { width: 20px; height: 20px; }
.car { width: 7px; height: 4px; color: #111; }
.tree { flex: 1; min-height: 0; margin-left: 7px; border: 1px solid #6f9fb5; border-bottom: 0; border-radius: 4px 4px 0 0; background: #fff; }
.row { display: flex; align-items: center; gap: 3px; height: 20px; white-space: nowrap; }
.row > svg { width: 16px; height: 16px; }
.root { padding-left: 4px; }
.tree li { position: relative; }
.tree li::before { content: ""; position: absolute; left: 12px; top: 0; bottom: 0; border-left: 1px dotted #aaa; }
.tree li:last-child::before { bottom: auto; height: 10px; }
.tree li li { margin-left: 20px; }
.node { display: grid; place-items: center; width: 24px; height: 20px; margin-right: -3px; background: repeating-linear-gradient(90deg, #aaa 0 1px, transparent 1px 2px) 12px 10px / 11px 1px no-repeat; }
.node button { position: relative; width: 9px; height: 9px; margin-left: 1px; border-radius: 2px; background: #e6f2fa; box-shadow: 0 0 0 1px #b4cedf; font: 11px/8px "Liberation Sans", sans-serif; color: #123; }
.splitter { display: flex; flex-direction: column; gap: 9px; padding: 221px 0 0 1px; }
.grip { height: 94px; border: 1px solid #8496a2; border-right: 0; border-radius: 4px 0 0 4px; background: radial-gradient(circle at 3px 50%, #fff 0 1px, #333 1px 2px, transparent 2px), #cfdeea; }
.grip.pale { border-color: #b5cfde; background-color: #d3e2ed; }

.viewport { position: relative; flex: 1; min-width: 0; background: linear-gradient(#c6dbec 0, #97b1d2 48%, #6483ad 100%); }
.model { display: block; width: 100%; height: 100%; }
.datum { fill: none; stroke-width: 1; }
.gray { stroke: #7d7c87; }
.brown { stroke: #a0622d; }
.faint { stroke: #7b7e86; }
.boxes { fill: #8aa6ca; }
.labels { font: 12px "Liberation Mono", monospace; fill: #a0622d; }
.watermark { position: absolute; right: 5px; bottom: 5px; display: flex; width: 206px; height: 62px; background: #a0b2ce; }
.watermark svg { flex: none; width: 58px; height: 62px; }
.watermark div { display: flex; flex-direction: column; justify-content: space-between; }
.watermark strong { padding-left: 11px; font: 700 29px/38px "Noto Sans CJK SC", sans-serif; color: #4a9691; }
.watermark span { font: 15px/24px "Noto Sans", sans-serif; color: #78a0bf; }
```
